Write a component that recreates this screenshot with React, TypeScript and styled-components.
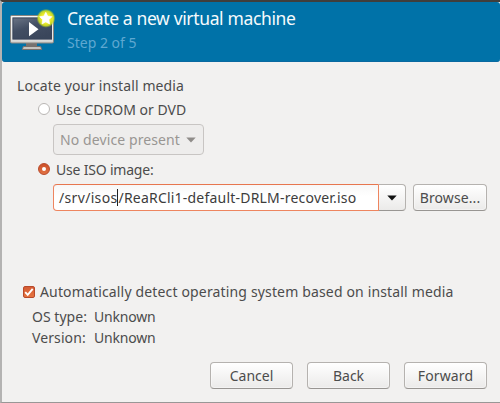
import React from "react";
import styled, { createGlobalStyle } from "styled-components";

const GlobalStyle = createGlobalStyle`
  *, *::before, *::after { box-sizing: border-box; }
  body { margin: 0; background: #b7b6b5; }
`;

const Window = styled.main`
  width: 500px;
  height: 403px;
  display: flex;
  flex-direction: column;
  border-top: 2px solid #403e3c;
  border-left: 2px solid #b4b3b2;
  border-bottom: 1px solid #999796;
  background: #f2f1f0;
  color: #4c4c4c;
  font: 14px/20px "Noto Sans", sans-serif;
  white-space: pre;
  overflow: hidden;
`;

const Header = styled.header`
  flex: none;
  height: 60px;
  display: flex;
  gap: 10px;
  padding: 5px 0 0 7px;
  border-radius: 3px;
  border-bottom: 1px solid #0969a0;
  background: #0072a8;
`;

const Titles = styled.div`
  display: flex;
  flex-direction: column;
`;

const Title = styled.h1`
  margin: 0;
  color: #f5fafc;
  font-size: 17.5px;
  font-weight: 400;
  line-height: 22px;
  letter-spacing: -0.36px;
`;

const Step = styled.div`
  margin-top: 4px;
  color: #5fa8d1;
`;

const Content = styled.section`
  flex: 1;
  display: flex;
  flex-direction: column;
  padding: 14px 13px 13px 15px;
`;

const Text = styled.span<{ $spacing?: number }>`
  letter-spacing: ${({ $spacing = 0 }) => $spacing}px;
`;

const Options = styled.div`
  display: flex;
  flex-direction: column;
  align-items: flex-start;
  gap: 4px;
  margin: 4px 0 0 21px;
`;

const Choice = styled.label`
  display: flex;
  align-items: flex-start;
  gap: 6px;
  height: 20px;
`;

const Radio = styled.i<{ $on?: boolean }>`
  width: 12px;
  height: 12px;
  margin-top: 3px;
  display: grid;
  place-items: center;
  border-radius: 50%;
  border: 1px solid ${({ $on }) => ($on ? "#b8492a" : "#b9b6b4")};
  background: ${({ $on }) => ($on ? "linear-gradient(#cc5029, #e27243)" : "#fff")};

  &::after {
    content: "";
    width: 4px;
    height: 4px;
    border-radius: 50%;
    background: #fff;
  }
`;

const DeviceSelect = styled.div`
  width: 151px;
  height: 31px;
  margin: 0 0 1px 15px;
  padding: 0 7px 0 6px;
  display: flex;
  align-items: center;
  justify-content: space-between;
  border: 1px solid #c8c5c3;
  border-radius: 4px;
  background: #eeedec;
  color: #999693;
`;

const MediaRow = styled.div`
  display: flex;
  gap: 7px;
  margin-left: 15px;
`;

const PathCombo = styled.div`
  display: flex;
  width: 353px;
  height: 27px;
`;

const PathEntry = styled.div`
  width: 326px;
  padding: 3px 0 0 5px;
  display: flex;
  border: 1px solid #ee855f;
  border-top-color: #e7764f;
  border-radius: 4px 0 0 4px;
  background: linear-gradient(#f7f7f7, #fff 45%);
  color: #3c3c3c;
`;

const Caret = styled.i`
  width: 1px;
  height: 17px;
  margin-top: 1px;
  background: #222;
`;

const ArrowButton = styled.div`
  flex: 1;
  display: grid;
  place-items: center;
  border: 1px solid #b5b2af;
  border-bottom-color: #999693;
  border-left: 0;
  border-radius: 0 4px 4px 0;
  background: linear-gradient(#fff, #ebeae9);
`;

const Button = styled.button<{ $width: number; $spacing?: number }>`
  width: ${({ $width }) => $width}px;
  height: 27px;
  padding: 0;
  border: 1px solid #b5b2af;
  border-bottom-color: #989592;
  border-radius: 4px;
  background: linear-gradient(#fff, #ebeae9);
  box-shadow: inset 0 0 0 1px rgba(255, 255, 255, 0.4);
  color: #4c4c4c;
  font: inherit;
  line-height: 24px;
  letter-spacing: ${({ $spacing = 0 }) => $spacing}px;
`;

const DetectChoice = styled.label`
  display: flex;
  gap: 5px;
  margin: 71px 0 0 6px;
`;

const CheckBox = styled.i`
  width: 12px;
  height: 12px;
  margin-top: 4px;
  display: grid;
  place-items: center;
  border: 1px solid #b8492a;
  border-radius: 2px;
  background: linear-gradient(#d55c34, #e5743f);

  svg { display: block; }
`;

const Facts = styled.dl`
  display: grid;
  grid-template-columns: 62px auto;
  row-gap: 1px;
  margin: 5px 0 0 15px;

  dd { margin: 0; }
`;

const Footer = styled.footer`
  display: flex;
  justify-content: flex-end;
  gap: 14px;
  margin-top: auto;
`;

function MachineIcon() {
  return (
    <svg width="48" height="48" viewBox="0 0 48 48">
      <defs>
        <linearGradient id="screen" x1="0" y1="0" x2="0.6" y2="1">
          <stop offset="0" stopColor="#6b7586" />
          <stop offset="0.5" stopColor="#424e63" />
          <stop offset="1" stopColor="#3a465b" />
        </linearGradient>
        <linearGradient id="bezel" x1="0" y1="0" x2="0" y2="1">
          <stop offset="0" stopColor="#f6f6f5" />
          <stop offset="0.85" stopColor="#e6e6e4" />
          <stop offset="1" stopColor="#c9c8c5" />
        </linearGradient>
        <radialGradient id="glow">
          <stop offset="0.5" stopColor="#eeee2c" />
          <stop offset="0.78" stopColor="#d3e01f" stopOpacity="0.9" />
          <stop offset="1" stopColor="#8bbd30" stopOpacity="0" />
        </radialGradient>
      </defs>
      <path d="M17 36h11v4h-11z" fill="#77726f" />
      <path d="M14.3 39.5h17.4l1 3h-19.4z" fill="#c4c3bf" stroke="#77716d" strokeLinejoin="round" />
      <rect x="1.5" y="8.5" width="43" height="27.5" rx="1.2" fill="url(#bezel)" stroke="#8a8681" />
      <rect x="3.9" y="10.9" width="38.6" height="21.2" fill="url(#screen)" stroke="#39445a" />
      <path d="M20 15l9.5 7.2L20 29.2z" fill="#fff" />
      <circle cx="37" cy="11.3" r="9.6" fill="url(#glow)" />
      <path
        d="M36.8 5.3l1.9 3.8 4.2.6-3 3 .7 4.2-3.8-2-3.8 2 .7-4.2-3-3 4.2-.6z"
        fill="#fff"
        stroke="#fff"
        strokeWidth="0.7"
        strokeLinejoin="round"
      />
    </svg>
  );
}

function DownArrow({ color }: { color: string }) {
  return (
    <svg width="10" height="6" viewBox="0 0 10 6">
      <path d="M0.3 0.4h9.4L5 5.6z" fill={color} />
    </svg>
  );
}

export default function App() {
  return (
    <>
      <GlobalStyle />
      <Window>
        <Header>
          <MachineIcon />
          <Titles>
            <Title>Create a new virtual machine</Title>
            <Step>Step 2 of 5</Step>
          </Titles>
        </Header>
        <Content>
          <Text $spacing={0.1}>Locate your install media</Text>
          <Options>
            <Choice>
              <Radio />
              <Text>Use CDROM or DVD</Text>
            </Choice>
            <DeviceSelect>
              <Text $spacing={0.1}>No device present</Text>
              <DownArrow color="#8f8c89" />
            </DeviceSelect>
            <Choice>
              <Radio $on />
              <Text $spacing={-0.2}>Use ISO image:</Text>
            </Choice>
            <MediaRow>
              <PathCombo>
                <PathEntry>
                  <Text $spacing={0.33}>/srv/isos</Text>
                  <Caret />
                  <Text $spacing={0.21}>/ReaRCli1-default-DRLM-recover.iso</Text>
                </PathEntry>
                <ArrowButton>
                  <DownArrow color="#111" />
                </ArrowButton>
              </PathCombo>
              <Button $width={74} $spacing={0.1}>Browse...</Button>
            </MediaRow>
          </Options>
          <DetectChoice>
            <CheckBox>
              <svg width="10" height="10" viewBox="0 0 10 10">
                <path d="M1.2 5.2l2.5 2.6 5-6" fill="none" stroke="#fff" strokeWidth="1.9" />
              </svg>
            </CheckBox>
            <Text $spacing={0.155}>Automatically detect operating system based on install media</Text>
          </DetectChoice>
          <Facts>
            <dt><Text $spacing={0.03}>OS type:</Text></dt>
            <dd><Text $spacing={-0.2}>Unknown</Text></dd>
            <dt><Text $spacing={0.1}>Version:</Text></dt>
            <dd><Text $spacing={-0.2}>Unknown</Text></dd>
          </Facts>
          <Footer>
            <Button $width={83} $spacing={0}>Cancel</Button>
            <Button $width={83} $spacing={0}>Back</Button>
            <Button $width={83} $spacing={0.15}>Forward</Button>
          </Footer>
        </Content>
      </Window>
    </>
  );
}
